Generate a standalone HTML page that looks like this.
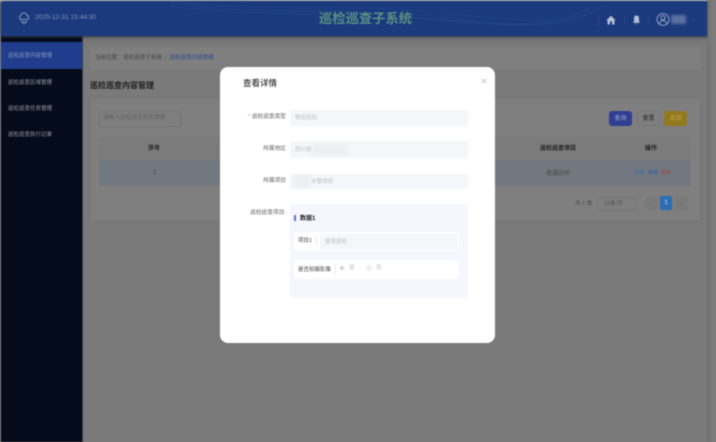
<!DOCTYPE html>
<html lang="zh-CN"><head><meta charset="utf-8"><title>巡检巡查子系统</title>
<style>
*{box-sizing:border-box;margin:0;padding:0}
html,body{width:716px;height:442px;overflow:hidden;background:#7a7a7a}
body{font-family:"Liberation Sans","Noto Sans CJK SC",sans-serif;position:relative}
#p{position:absolute;inset:0;filter:blur(.6px)}
.a{position:absolute;white-space:nowrap;line-height:1}
.b{position:absolute}
.c{transform:translateX(-50%)}
.inp{position:absolute;background:#f5f6fa;border-radius:2px}
.lab{position:absolute;right:430px;color:#5c5c5c;font-size:5.7px;line-height:1;white-space:nowrap}
.ph{position:absolute;color:#bcbec4;font-size:5.5px;line-height:1;white-space:nowrap}
.m{position:absolute;left:8px;color:#9a9ea8;font-size:5.5px;line-height:1;white-space:nowrap}
</style></head><body><div id="p">
<div class="b" style="left:0;top:0;width:716px;height:442px;background:#7a7a7a"></div>
<div class="b" style="left:0;top:0;width:716px;height:1px;background:#c8c8c8"></div>
<div class="b" style="left:707px;top:0;width:9px;height:442px;background:linear-gradient(90deg,#707070,#7c7c7c 60%,#7e7e7e)"></div>
<div class="b" style="left:83px;top:36px;width:624px;height:8px;background:linear-gradient(#6c6c6c,#7a7a7a)"></div>

<div class="b" style="left:90px;top:47px;width:611px;height:23px;background:#7f7f7f"></div>
<div class="a" style="left:95px;top:56px;font-size:5.5px;color:#454545"><span>当前位置：</span><span style="margin-left:1px">巡检巡查子系统</span><span style="margin:0 3px;color:#555">/</span><span style="color:#2a4a90">巡检巡查内容管理</span></div>
<div class="a" style="left:90px;top:82px;font-size:8px;font-weight:700;color:#202020">巡检巡查内容管理</div>

<div class="b" style="left:91px;top:99px;width:609px;height:121px;background:#7f7f7f;box-shadow:0 0 3px #747474"></div>
<div class="b" style="left:99px;top:111px;width:82px;height:16px;border:1px solid #747474;border-radius:2px"></div>
<div class="a" style="left:103px;top:116px;font-size:5.7px;color:#626262">请输入巡检巡查类型搜索</div>
<div class="b" style="left:99px;top:137px;width:592px;height:23px;background:#7b7b7b"></div>
<div class="b" style="left:99px;top:160px;width:592px;height:26px;background:#72787f"></div>
<div class="a c" style="left:154px;top:146px;font-size:6px;font-weight:700;color:#202020">序号</div>
<div class="a" style="left:153px;top:170px;font-size:6px;color:#444">1</div>
<div class="a c" style="left:558px;top:146px;font-size:6px;font-weight:700;color:#202020">巡检巡查项目</div>
<div class="a c" style="left:651px;top:146px;font-size:6px;font-weight:700;color:#202020">操作</div>
<div class="a c" style="left:558px;top:171px;font-size:6px;color:#4a4a4a">普通巡检</div>
<div class="a" style="left:634px;top:171px;font-size:5px;color:#3a6ea8">详情</div>
<div class="a" style="left:648px;top:171px;font-size:5px;color:#2f5f9e">编辑</div>
<div class="a" style="left:661px;top:171px;font-size:5px;color:#a04850">删除</div>

<div class="b" style="left:609px;top:111px;width:23px;height:15px;background:#303f92;border-radius:3px"></div>
<div class="a c" style="left:620.5px;top:116px;font-size:6px;color:#a0a8cc">查询</div>
<div class="b" style="left:637px;top:111px;width:23px;height:15px;border:1px solid #757575;background:#7f7f7f;border-radius:3px"></div>
<div class="a c" style="left:648.5px;top:116px;font-size:6px;color:#2c2c2c">重置</div>
<div class="b" style="left:664px;top:111px;width:23px;height:15px;background:#94781c;border-radius:3px"></div>
<div class="a c" style="left:675.5px;top:116px;font-size:6px;color:#bca656">添加</div>

<div class="a" style="left:575px;top:202px;font-size:5.6px;color:#4a4a4a">共 1 条</div>
<div class="b" style="left:597px;top:197px;width:40px;height:14px;border:1px solid #757575;border-radius:2px"></div>
<div class="a" style="left:604px;top:202px;font-size:5.6px;color:#505050">10条/页</div>
<div class="a" style="left:630px;top:201px;font-size:5px;color:#666">⌄</div>
<div class="b" style="left:645px;top:197px;width:13px;height:13px;background:#7a7a7a;border-radius:2px"></div>
<div class="a" style="left:649px;top:201px;font-size:6px;color:#666">‹</div>
<div class="b" style="left:660px;top:196px;width:12px;height:14px;background:#2a6db4;border-radius:1px"></div>
<div class="a c" style="left:666px;top:200px;font-size:6px;font-weight:700;color:#a8c4e0">1</div>
<div class="b" style="left:675px;top:197px;width:13px;height:13px;background:#7a7a7a;border-radius:2px"></div>
<div class="a" style="left:680px;top:201px;font-size:6px;color:#666">›</div>

<div class="b" style="left:1px;top:36px;width:82px;height:406px;background:#040b1a;border-right:1px solid #3a404c"></div>
<div class="b" style="left:1px;top:42px;width:81px;height:27px;background:#1f3d8c"></div>
<div class="m" style="top:54px;color:#8c98bd">巡检巡查内容管理</div>
<div class="m" style="top:80.500px">巡检巡查区域管理</div>
<div class="m" style="top:107px">巡检巡查任务管理</div>
<div class="m" style="top:133px">巡检巡查执行记录</div>

<div class="b" style="left:1px;top:1px;width:706px;height:35px;background:#1a3a7d;border-radius:3px 0 0 0;overflow:hidden;box-shadow:0 1px 2px #333a48">
<svg width="706" height="35" style="position:absolute;left:0;top:0"><g fill="none" stroke="#2f5092" stroke-width=".5" opacity=".75"><path d="M170 2C260 16 330 5 420 14S560 34 600 4"/><path d="M170 5C260 18 330 8 420 17S560 31 610 2"/><path d="M170 0C260 12 330 2 420 10S560 28 590 6"/><path d="M410 17C470 19 530 34 590 8"/></g></svg>
</div>
<svg class="b" style="left:18px;top:12px" width="12" height="13" viewBox="0 0 12 13" fill="none" stroke="#8593b5" stroke-width="1"><path d="M3 7.500A2.200 2.200 0 0 1 3 3.300 3 3 0 0 1 8.800 3.200 2.200 2.200 0 0 1 9 7.500Z"/><path d="M1.500 7.500H10.500M4 8.500V10.500H8V8.500M6 10.500V12.500"/></svg>
<div class="a" style="left:35px;top:15px;font-size:6.600px;color:#8593b5">2025-12-31 15:44:30</div>
<div class="a" style="left:319px;top:12px;font-size:13.300px;font-weight:700;color:#5a9082">巡检巡查子系统</div>
<div class="b" style="left:598px;top:15px;width:1px;height:11px;background:#2b4888"></div>
<div class="b" style="left:624px;top:15px;width:1px;height:9px;background:#2b4888"></div>
<div class="b" style="left:648px;top:15px;width:1px;height:9px;background:#2b4888"></div>
<svg class="b" style="left:606px;top:15px" width="10" height="10" viewBox="0 0 10 10"><path d="M5 .8 .3 5.200H1.500V9.500H4V6.500H6V9.500H8.500V5.200H9.700Z" fill="#b4bdd2"/></svg>
<svg class="b" style="left:632px;top:15px" width="9" height="10" viewBox="0 0 9 10"><path d="M4.500 .5C2.600 .5 2 2 2 3.500V6L1 7.800H8L7 6V3.500C7 2 6.400 .5 4.500 .5ZM3.500 8.500H5.500L4.500 9.600Z" fill="#b4bdd2"/></svg>
<svg class="b" style="left:656px;top:12px" width="14" height="15" viewBox="0 0 14 15" fill="none" stroke="#a4aec8" stroke-width=".9"><circle cx="7" cy="7.500" r="5.900"/><circle cx="7" cy="5.800" r="2.100"/><path d="M3.300 12C3.800 9.800 5.300 8.600 7 8.600S10.200 9.800 10.700 12"/></svg>
<div class="b" style="left:671px;top:15px;width:15px;height:9px;background:#5a70a4;filter:blur(1.200px)"></div>
<div class="a" style="left:692px;top:17px;font-size:5px;color:#5e73a6">⌄</div>

<div class="b" style="left:220px;top:67px;width:275px;height:276px;background:#fff;border-radius:8px"></div>
<div class="a" style="left:243px;top:79px;font-size:8.500px;font-weight:500;color:#333">查看详情</div>
<svg class="b" style="left:481px;top:78px" width="6" height="6" viewBox="0 0 6 6" stroke="#b5b5b5" stroke-width=".7"><path d="M.8.8 5.200 5.200M5.200.8.8 5.200"/></svg>

<div class="lab" style="top:115px"><span style="color:#f08a8a">* </span>巡检巡查类型</div>
<div class="inp" style="left:290px;top:110px;width:178px;height:16px"></div>
<div class="ph" style="left:295px;top:116px">管道巡检</div>
<div class="lab" style="top:147px">所属地区</div>
<div class="inp" style="left:290px;top:141px;width:178px;height:17px"></div>
<div class="ph" style="left:295px;top:148px">四川省</div>
<div class="b" style="left:312px;top:144px;width:36px;height:11px;background:#eceef2;filter:blur(1.500px)"></div>
<div class="lab" style="top:179px">所属项目</div>
<div class="inp" style="left:290px;top:174px;width:178px;height:15px"></div>
<div class="ph" style="left:311px;top:180px">水管项目</div>
<div class="b" style="left:295px;top:175px;width:15px;height:13px;background:#eceef2;filter:blur(1.500px)"></div>
<div class="lab" style="top:211px">巡检巡查项目:</div>

<div class="b" style="left:290px;top:204px;width:178px;height:94px;background:#f5f6fe;border-radius:3px"></div>
<div class="b" style="left:294px;top:215px;width:2px;height:6px;background:#5f6fd8"></div>
<div class="a" style="left:300px;top:215.500px;font-size:6px;font-weight:700;color:#222">数据1</div>
<div class="b" style="left:294px;top:232px;width:165px;height:19px;background:#fff;border-radius:3px"></div>
<div class="a" style="left:298px;top:239px;font-size:5.500px;color:#444">项目1</div>
<div class="b" style="left:316px;top:236px;width:1px;height:10px;background:#e8e8ee"></div>
<div class="inp" style="left:320px;top:234px;width:138px;height:16px"></div>
<div class="ph" style="left:325px;top:240px">管道巡检</div>
<div class="b" style="left:294px;top:260px;width:165px;height:19px;background:#fff;border-radius:3px"></div>
<div class="a" style="left:298px;top:268px;font-size:5.500px;color:#444">是否拍摄影像</div>
<div class="b" style="left:335px;top:264px;width:1px;height:10px;background:#e8e8ee"></div>
<div class="b" style="left:339px;top:265px;width:6px;height:6px;border-radius:50%;background:#eef0f5"></div>
<div class="b" style="left:341px;top:267px;width:2px;height:2px;border-radius:50%;background:#a8acb8"></div>
<div class="ph" style="left:349px;top:266px">是</div>
<div class="b" style="left:366px;top:265px;width:6px;height:6px;border-radius:50%;background:#eef0f5"></div>
<div class="ph" style="left:376px;top:266px">否</div>
</div></body></html>
